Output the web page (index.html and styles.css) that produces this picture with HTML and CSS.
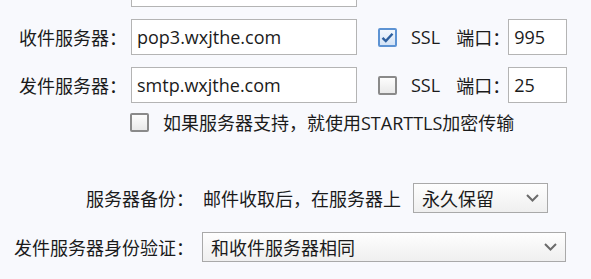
FILE: index.html
```html
<!DOCTYPE html>
<html lang="zh-CN">
<head>
    <meta charset="UTF-8">
    <title>服务器设置</title>
    <link rel="stylesheet" href="styles.css">
</head>
<body>
    <div class="panel">
        <div class="top-edge"></div>

        <div class="server-row">
            <span class="label">收件服务器：</span>
            <div class="field host">pop3.wxjthe.com</div>
            <span class="check checked">
                <svg width="13" height="11" viewBox="0 0 13 11"><path d="M1.5 5.8 L4.8 9 L11.5 1.8" fill="none" stroke="#2d5f9e" stroke-width="2.4"/></svg>
            </span>
            <span class="ssl">SSL</span>
            <span class="port-label">端口：</span>
            <div class="field port">995</div>
        </div>

        <div class="server-row">
            <span class="label">发件服务器：</span>
            <div class="field host">smtp.wxjthe.com</div>
            <span class="check"></span>
            <span class="ssl">SSL</span>
            <span class="port-label">端口：</span>
            <div class="field port">25</div>
        </div>

        <div class="tls-row">
            <span class="check"></span>
            <span class="tls-text">如果服务器支持，就使用STARTTLS加密传输</span>
        </div>

        <div class="option-row backup">
            <span class="wide-label">服务器备份：</span>
            <span class="hint">邮件收取后，在服务器上</span>
            <div class="dropdown short">
                <span>永久保留</span>
                <svg width="13" height="8" viewBox="0 0 13 8"><path d="M1 1 L6.5 6.5 L12 1" fill="none" stroke="#6b6b6b" stroke-width="2"/></svg>
            </div>
        </div>

        <div class="option-row auth">
            <span class="wide-label">发件服务器身份验证：</span>
            <div class="dropdown long">
                <span>和收件服务器相同</span>
                <svg width="13" height="8" viewBox="0 0 13 8"><path d="M1 1 L6.5 6.5 L12 1" fill="none" stroke="#6b6b6b" stroke-width="2"/></svg>
            </div>
        </div>
    </div>
</body>
</html>
```

FILE: styles.css
```css
body {
    margin: 0;
    background-color: #f8f9fd;
    font-family: "Open Sans", "Noto Sans CJK SC", sans-serif;
    font-size: 18px;
    color: #1b1b1b;
}

.panel {
    width: 591px;
    height: 279px;
    overflow: hidden;
}

.top-edge {
    margin-left: 131px;
    width: 224px;
    height: 6px;
    background: #fff;
    border: 1px solid #b4b4b4;
    border-top: none;
}

.server-row,
.tls-row,
.option-row {
    display: flex;
    align-items: center;
    white-space: nowrap;
}

.server-row > *,
.tls-row > *,
.option-row > * {
    flex: none;
}

.server-row {
    height: 36px;
    margin-top: 12px;
}

.label {
    width: 127px;
    text-align: right;
}

.field {
    box-sizing: border-box;
    height: 36px;
    line-height: 34px;
    background: #fff;
    border: 1px solid #b4b4b4;
    padding-left: 5px;
}

.host {
    margin-left: 4px;
    width: 226px;
}

.port {
    width: 59px;
}

.check {
    box-sizing: border-box;
    width: 19px;
    height: 19px;
    border: 2px solid #8a8a8a;
    border-radius: 2px;
    background: linear-gradient(#fdfdfd, #e9e9e9);
    display: flex;
    align-items: center;
    justify-content: center;
}

.check.checked {
    border-color: #5d93d3;
    background: linear-gradient(#f2f7fd, #d3e3f6);
}

.server-row .check {
    margin-left: 21px;
}

.ssl {
    margin-left: 14px;
}

.port-label {
    margin-left: 16px;
    width: 52px;
}

.tls-row {
    margin-top: 9px;
    margin-left: 130px;
    height: 20px;
}

.tls-text {
    margin-left: 14px;
}

.backup {
    margin-top: 51px;
    height: 30px;
}

.auth {
    margin-top: 19px;
    height: 30px;
}

.wide-label {
    width: 194px;
    text-align: right;
}

.hint {
    margin-left: 9px;
}

.dropdown {
    box-sizing: border-box;
    height: 30px;
    border: 1px solid #a9a9a9;
    background: linear-gradient(#fefefe, #efefef);
    display: flex;
    align-items: center;
    justify-content: space-between;
    padding: 0 8px;
}

.dropdown.short {
    margin-left: 12px;
    width: 135px;
}

.dropdown.long {
    margin-left: 8px;
    width: 364px;
}
```
